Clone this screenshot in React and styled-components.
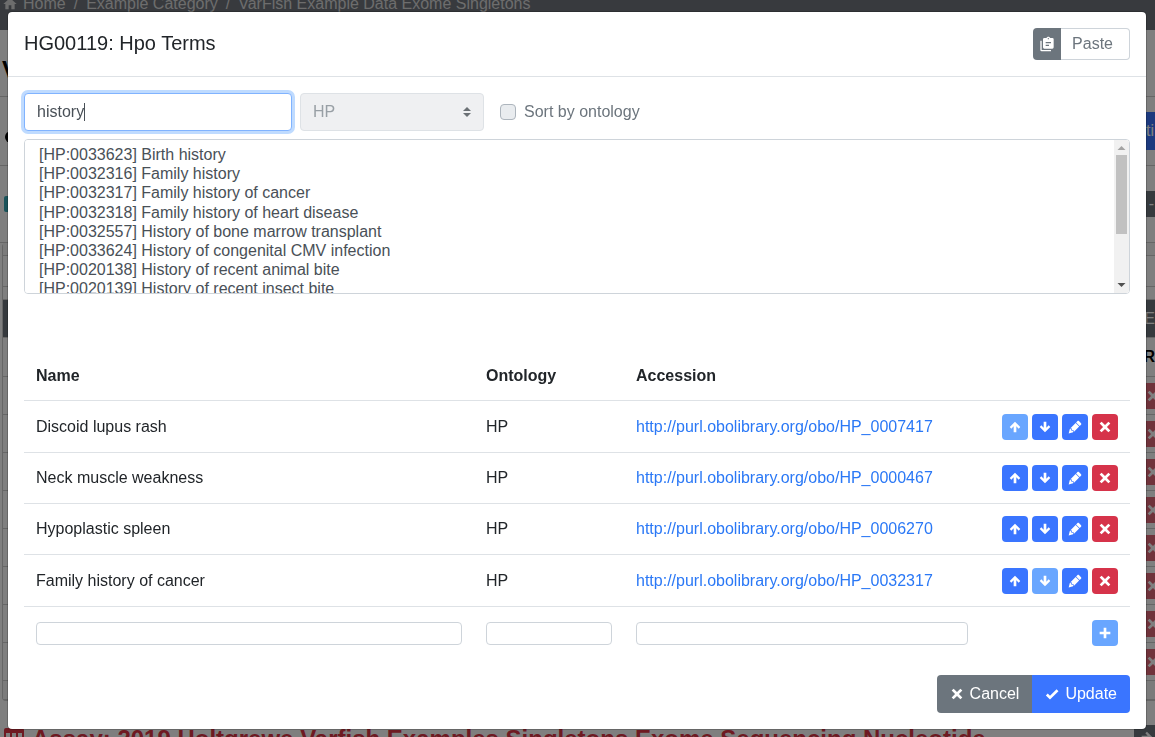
import React from "react";
import styled, { createGlobalStyle, css } from "styled-components";

const Global = createGlobalStyle`
  *, *::before, *::after { box-sizing: border-box; }
  html, body { margin: 0; }
  body {
    font-family: "Liberation Sans", Arial, sans-serif;
    font-size: 16px;
    line-height: 24px;
    color: #212529;
    background: #fff;
    overflow: hidden;
  }
  button, input, select { font: inherit; margin: 0; }
  h1, h2, h5 { margin: 0; }
`;

const PATHS = {
  up: "M14,20H10V11L6.5,14.5L4.08,12.08L12,4.16L19.92,12.08L17.5,14.5L14,11V20Z",
  down: "M10,4H14V13L17.5,9.5L19.92,11.92L12,19.84L4.08,11.92L6.5,9.5L10,13V4Z",
  right: "M4,10V14H13L9.5,17.5L11.92,19.92L19.84,12L11.92,4.08L9.5,6.5L13,10H4Z",
  close: "M20 6.91L17.09 4L12 9.09L6.91 4L4 6.91L9.09 12L4 17.09L6.91 20L12 14.91L17.09 20L20 17.09L14.91 12L20 6.91Z",
  plus: "M20 14H14V20H10V14H4V10H10V4H14V10H20V14Z",
  check: "M9,20.42L2.79,14.21L5.62,11.38L9,14.77L18.88,4.88L21.71,7.71L9,20.42Z",
  pencil:
    "M16.84,2.73C16.45,2.73 16.07,2.88 15.77,3.17L13.65,5.29L18.95,10.6L21.07,8.5C21.67,7.89 21.67,6.94 21.07,6.36L17.9,3.17C17.6,2.88 17.22,2.73 16.84,2.73M12.94,6L4.84,14.11L7.4,14.39L7.58,16.68L9.86,16.85L10.15,19.41L18.25,11.3M4.25,15.04L2.5,21.73L9.2,19.94L8.96,17.78L6.65,17.61L6.47,15.29",
  home: "M10,20V14H14V20H19V12H22L12,3L2,12H5V20H10Z",
  paste:
    "M4,7V21H18V23H4A2,2 0 0,1 2,21V7H4M20,3A2,2 0 0,1 22,5V17A2,2 0 0,1 20,19H8A2,2 0 0,1 6,17V5A2,2 0 0,1 8,3H11.18C11.6,1.84 12.7,1 14,1C15.3,1 16.4,1.84 16.82,3H20M14,3A1,1 0 0,0 13,4A1,1 0 0,0 14,5A1,1 0 0,0 15,4A1,1 0 0,0 14,3M10,9V11H18V9H10M10,13V15H15V13H10Z",
  table:
    "M4,3H20A2,2 0 0,1 22,5V20A2,2 0 0,1 20,22H4A2,2 0 0,1 2,20V5A2,2 0 0,1 4,3M4,8V12H8V8H4M10,8V12H14V8H10M20,12V8H16V12H20M4,14V20H8V14H4M10,14V20H14V14H10M20,20V14H16V20H20Z",
};

const Svg = styled.svg`
  flex: none;
  display: block;
  fill: currentColor;
`;

const Icon = ({ name, size = 16 }) => (
  <Svg width={size} height={size} viewBox="0 0 24 24" aria-hidden="true">
    <path fillRule="evenodd" d={PATHS[name]} />
  </Svg>
);

/* Page behind the dialog */

const Page = styled.div`
  height: 100vh;
  overflow: hidden;
`;

const Breadcrumbs = styled.nav`
  display: flex;
  align-items: flex-start;
  gap: 8px;
  height: 30px;
  padding-left: 2px;
  background: #70757d;
  color: #dadada;
  line-height: 8px;
  white-space: nowrap;

  a {
    display: flex;
    gap: 5px;
    color: inherit;
    text-decoration: none;
  }
  svg { margin-top: -4px; }
`;

const PageTitle = styled.h1`
  height: 67px;
  padding: 20px 0 0 2px;
  border-bottom: 1px solid #ccc;
  font-size: 24px;
  line-height: 40px;
  color: #000;
`;

const Strip = styled.div`
  display: flex;
  align-items: center;
  justify-content: space-between;
  height: ${(p) => p.$h}px;
  border-bottom: 1px solid #ccc;
`;

const Dot = styled.span`
  width: 12px;
  height: 12px;
  margin: 12px 0 0 5px;
  border-radius: 6px;
  background: #000;
`;

const Badge = styled.span`
  width: 16px;
  height: 16px;
  margin-left: 4px;
  border-radius: 2px;
  background: #35a7b5;
`;

const EdgeButton = styled.button`
  width: 40px;
  height: ${(p) => p.$h}px;
  padding: 0 1px;
  border: 0;
  background: ${(p) => p.$bg};
  color: #fff;
  text-align: right;
`;

const Card = styled.section`
  margin-left: 2px;
  border: 1px solid #ccc;
  border-right: 0;
  border-radius: 4px 0 0 4px;
  border-top: 0;
`;

const CardBand = styled.div`
  display: flex;
  align-items: center;
  justify-content: flex-end;
  height: ${(p) => p.$h}px;
  background: ${(p) => p.$bg || "#fff"};
  color: ${(p) => p.$color || "#000"};
  border-bottom: 1px solid #ccc;
  font-weight: ${(p) => (p.$bold ? 700 : 400)};
`;

const CellButton = styled.button`
  display: flex;
  align-items: center;
  justify-content: flex-end;
  width: 24px;
  height: 26px;
  padding: 0;
  border: 0;
  overflow: hidden;
  background: #d6334a;
  color: #fff;
  opacity: 0.75;

  svg { margin-right: -6px; }
`;

const AssayBar = styled.div`
  display: flex;
  align-items: flex-start;
  justify-content: space-between;
  padding-top: 24px;
`;

const AssayTitle = styled.h2`
  display: flex;
  align-items: flex-start;
  gap: 6px;
  padding-left: 2px;
  color: #dc3545;
  font-size: 24px;
  line-height: 28px;
  white-space: nowrap;
`;

const AssayMenu = styled.button`
  display: flex;
  justify-content: flex-end;
  width: 21px;
  height: 32px;
  padding: 4px 0;
  border: 0;
  background: #6c757d;
  color: #fff;
`;

/* Dialog */

const Backdrop = styled.div`
  position: fixed;
  inset: 0;
  padding: 11px 8px 0 7px;
  background: rgba(0, 0, 0, 0.5);
  overflow: hidden;
`;

const Dialog = styled.div`
  max-width: 1140px;
  margin: 0 auto;
  border: 1px solid rgba(0, 0, 0, 0.2);
  border-radius: 5px;
  background: #fff;
  background-clip: padding-box;
`;

const DialogHeader = styled.header`
  display: flex;
  align-items: flex-start;
  justify-content: space-between;
  padding: 16px;
  border-bottom: 1px solid #dee2e6;
`;

const DialogTitle = styled.h5`
  font-size: 20px;
  font-weight: 400;
  line-height: 30px;
`;

const PasteGroup = styled.div`
  display: flex;
  height: 32px;
`;

const PasteIcon = styled.span`
  display: flex;
  align-items: center;
  justify-content: center;
  width: 28px;
  border-radius: 4px 0 0 4px;
  background: #6c757d;
  color: #fff;
`;

const PasteButton = styled.button`
  padding: 0 16px 0 11px;
  border: 1px solid #ced4da;
  border-left: 0;
  border-radius: 0 4px 4px 0;
  background: #fff;
  color: #6c757d;
`;

const DialogBody = styled.div`
  padding: 16px 16px 0;
`;

const SearchRow = styled.form`
  display: flex;
  align-items: center;
  gap: 8px;
  margin-bottom: 8px;
`;

const field = css`
  border: 1px solid #ced4da;
  border-radius: 4px;
  background: #fff;
  color: #495057;
  outline: 0;
`;

const SearchBox = styled.div`
  position: relative;
  width: 268px;
`;

const SearchInput = styled.input`
  ${field}
  display: block;
  width: 100%;
  height: 38px;
  padding: 6px 12px;
  border-color: #80b3ff;
  box-shadow: 0 0 0 3px #bfdbff;
  caret-color: transparent;
`;

const TextCursor = styled.span`
  position: absolute;
  left: 60px;
  top: 10px;
  width: 1px;
  height: 18px;
  background: #495057;
  pointer-events: none;
`;

const SelectWrap = styled.div`
  position: relative;
  width: 184px;
`;

const OntologySelect = styled.select`
  ${field}
  appearance: none;
  display: block;
  width: 100%;
  height: 38px;
  padding: 6px 12px;

  &:disabled {
    border-color: #dee2e6;
    background: #eff0f2;
    color: #989fa5;
    opacity: 1;
  }
`;

const Caret = styled.svg`
  position: absolute;
  right: 13px;
  top: 14px;
  pointer-events: none;
`;

const CheckLabel = styled.label`
  display: flex;
  align-items: center;
  gap: 8px;
  margin-left: 8px;
  color: #6c757d;
`;

const Check = styled.input`
  appearance: none;
  width: 16px;
  height: 16px;
  border: 1px solid #adb5bd;
  border-radius: 4px;
  background: #e9ecef;
`;

const ListBox = styled.div`
  position: relative;
`;

const TermList = styled.select`
  ${field}
  display: block;
  width: 100%;
  height: 155px;
  padding: 6px 0 6px 12px;
  scrollbar-width: none;
`;

const ScrollBar = styled.div`
  position: absolute;
  top: 1px;
  right: 1px;
  bottom: 1px;
  display: flex;
  flex-direction: column;
  align-items: center;
  justify-content: space-between;
  width: 15px;
  border-radius: 0 3px 3px 0;
  background: #f1f1f1;
`;

const ScrollTrack = styled.div`
  flex: 1;
  width: 11px;
`;

const ScrollThumb = styled.div`
  height: 64%;
  background: #c1c1c1;
`;

const TermTable = styled.table`
  width: 100%;
  margin-top: 57px;
  border-collapse: separate;
  border-spacing: 0;
  table-layout: fixed;

  th { height: 49px; padding: 0 12px; text-align: left; }
  td { height: 51px; padding: 0 12px; border-top: 1px solid #dee2e6; }
  tbody tr:nth-child(3n + 1) td { height: 52px; }
  tbody tr:last-child td { height: 53px; }
`;

const Col = styled.col`
  width: ${(p) => p.$w}px;
`;

const TermLink = styled.a`
  color: #2a78f6;
  text-decoration: none;
`;

const Actions = styled.div`
  display: flex;
  justify-content: flex-end;
  gap: 4px;
`;

const ActionButton = styled.button`
  display: flex;
  align-items: center;
  justify-content: center;
  width: 26px;
  height: 26px;
  padding: 0;
  border: 0;
  border-radius: 4px;
  background: ${(p) => (p.$danger ? "#d6334a" : "#3a75ff")};
  color: #fff;

  &:disabled { background: #69a6ff; }
`;

const NewInput = styled.input`
  ${field}
  display: block;
  width: 100%;
  height: 23px;
  padding: 0 8px;
`;

const DialogFooter = styled.footer`
  display: flex;
  justify-content: flex-end;
  padding: 16px;
`;

const FooterButton = styled.button`
  display: flex;
  align-items: center;
  gap: 5px;
  height: 38px;
  padding: 0 13px 0 12px;
  border: 0;
  border-radius: ${(p) => (p.$primary ? "0 4px 4px 0" : "4px 0 0 4px")};
  background: ${(p) => (p.$primary ? "#3a75ff" : "#6c757d")};
  color: #fff;
`;

const MATCHES = [
  ["HP:0033623", "Birth history"],
  ["HP:0032316", "Family history"],
  ["HP:0032317", "Family history of cancer"],
  ["HP:0032318", "Family history of heart disease"],
  ["HP:0032557", "History of bone marrow transplant"],
  ["HP:0033624", "History of congenital CMV infection"],
  ["HP:0020138", "History of recent animal bite"],
  ["HP:0020139", "History of recent insect bite"],
];

const TERMS = [
  ["Discoid lupus rash", "HP_0007417"],
  ["Neck muscle weakness", "HP_0000467"],
  ["Hypoplastic spleen", "HP_0006270"],
  ["Family history of cancer", "HP_0032317"],
];

const ROWS = 8;

function Background() {
  return (
    <Page>
      <Breadcrumbs>
        <a href="#home"><Icon name="home" /> Home</a>
        <span>/</span>
        <a href="#category">Example Category</a>
        <span>/</span>
        <a href="#project">VarFish Example Data Exome Singletons</a>
      </Breadcrumbs>
      <PageTitle>V</PageTitle>
      <Strip $h={69}>
        <Dot />
        <EdgeButton $h={38} $bg="#3a75ff">ti</EdgeButton>
      </Strip>
      <Strip $h={77}>
        <Badge />
        <EdgeButton $h={26} $bg="#6c757d">-</EdgeButton>
      </Strip>
      <Card>
        <CardBand $h={13} $bg="#f7f7f7" />
        <CardBand $h={31} />
        <CardBand $h={13} />
        <CardBand $h={38} $bg="#6c757d" $color="#fff">E</CardBand>
        <CardBand $h={39} $bold>R</CardBand>
        {Array.from({ length: ROWS }, (_, i) => (
          <CardBand key={i} $h={38}>
            <CellButton aria-label="Remove"><Icon name="close" /></CellButton>
          </CardBand>
        ))}
        <CardBand $h={19} $bg="#f7f7f7" />
      </Card>
      <AssayBar>
        <AssayTitle>
          <Icon name="table" size={24} />
          Assay: 2019 Holtgrewe Varfish Examples Singletons Exome Sequencing Nucleotide
        </AssayTitle>
        <AssayMenu aria-label="Assay menu"><Icon name="right" /></AssayMenu>
      </AssayBar>
    </Page>
  );
}

function TermRow({ name, id, first, last }) {
  const url = "http://purl.obolibrary.org/obo/" + id;
  return (
    <tr>
      <td>{name}</td>
      <td>HP</td>
      <td><TermLink href={url}>{url}</TermLink></td>
      <td>
        <Actions>
          <ActionButton disabled={first} aria-label="Move up"><Icon name="up" /></ActionButton>
          <ActionButton disabled={last} aria-label="Move down"><Icon name="down" /></ActionButton>
          <ActionButton aria-label="Edit"><Icon name="pencil" /></ActionButton>
          <ActionButton $danger aria-label="Delete"><Icon name="close" /></ActionButton>
        </Actions>
      </td>
    </tr>
  );
}

export default function App() {
  return (
    <>
      <Global />
      <Background />
      <Backdrop>
        <Dialog role="dialog" aria-labelledby="dialog-title">
          <DialogHeader>
            <DialogTitle id="dialog-title">HG00119: Hpo Terms</DialogTitle>
            <PasteGroup>
              <PasteIcon><Icon name="paste" /></PasteIcon>
              <PasteButton>Paste</PasteButton>
            </PasteGroup>
          </DialogHeader>
          <DialogBody>
            <SearchRow>
              <SearchBox>
                <SearchInput aria-label="Search terms" defaultValue="history" />
                <TextCursor />
              </SearchBox>
              <SelectWrap>
                <OntologySelect aria-label="Ontology" disabled>
                  <option>HP</option>
                </OntologySelect>
                <Caret width="8" height="10" viewBox="0 0 4 5" aria-hidden="true">
                  <path fill="#6b7075" d="M2 0L0 2h4zm0 5L0 3h4z" />
                </Caret>
              </SelectWrap>
              <CheckLabel>
                <Check type="checkbox" disabled />
                Sort by ontology
              </CheckLabel>
            </SearchRow>
            <ListBox>
              <TermList aria-label="Matching terms" multiple>
                {MATCHES.map(([id, label]) => (
                  <option key={id} value={id}>{`[${id}] ${label}`}</option>
                ))}
              </TermList>
              <ScrollBar aria-hidden="true">
                <Svg width="15" height="15" viewBox="0 0 15 15">
                  <path fill="#a3a3a3" d="M7.5 6L11.5 10H3.5Z" />
                </Svg>
                <ScrollTrack>
                  <ScrollThumb />
                </ScrollTrack>
                <Svg width="15" height="15" viewBox="0 0 15 15">
                  <path fill="#505050" d="M7.5 9L11.5 5H3.5Z" />
                </Svg>
              </ScrollBar>
            </ListBox>
            <TermTable>
              <colgroup>
                <Col $w={450} />
                <Col $w={150} />
                <Col $w={356} />
                <Col $w={150} />
              </colgroup>
              <thead>
                <tr>
                  <th>Name</th>
                  <th>Ontology</th>
                  <th>Accession</th>
                  <th aria-label="Actions" />
                </tr>
              </thead>
              <tbody>
                {TERMS.map(([name, id], i) => (
                  <TermRow key={id} name={name} id={id} first={i === 0} last={i === TERMS.length - 1} />
                ))}
                <tr>
                  <td><NewInput aria-label="New term name" /></td>
                  <td><NewInput aria-label="New term ontology" /></td>
                  <td><NewInput aria-label="New term accession" /></td>
                  <td>
                    <Actions>
                      <ActionButton disabled aria-label="Add term"><Icon name="plus" /></ActionButton>
                    </Actions>
                  </td>
                </tr>
              </tbody>
            </TermTable>
          </DialogBody>
          <DialogFooter>
            <FooterButton><Icon name="close" /> Cancel</FooterButton>
            <FooterButton $primary><Icon name="check" /> Update</FooterButton>
          </DialogFooter>
        </Dialog>
      </Backdrop>
    </>
  );
}
